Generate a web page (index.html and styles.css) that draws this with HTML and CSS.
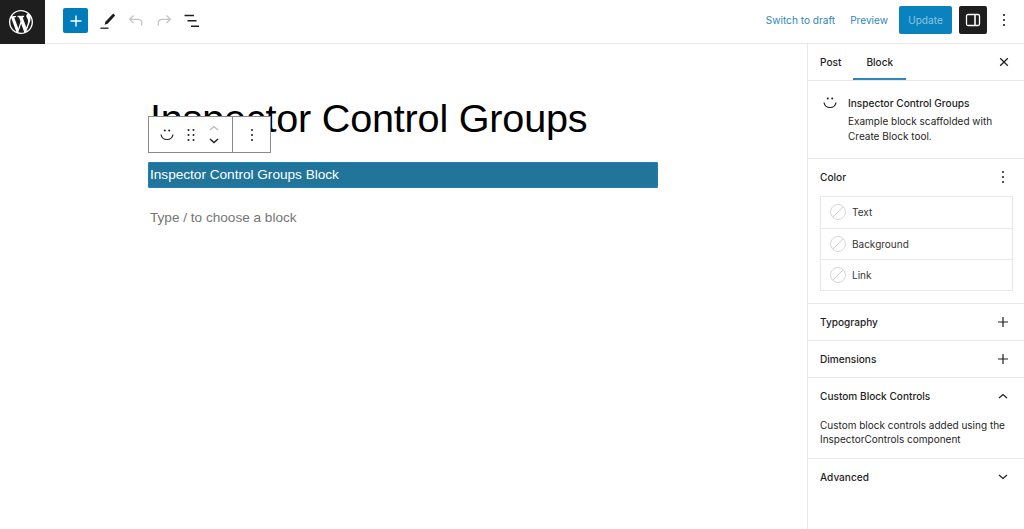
FILE: index.html
```html
<!DOCTYPE html>
<html lang="en">
<head>
    <meta charset="UTF-8">
    <meta name="viewport" content="width=device-width, initial-scale=1.0">
    <title>Inspector Control Groups</title>
    <link rel="stylesheet" href="styles.css">
</head>
<body>
    <header class="topbar">
        <a class="logo">
            <svg width="24" height="24" viewBox="0 0 20 20" fill="#fff"><path d="M20 10c0-5.51-4.49-10-10-10C4.48 0 0 4.49 0 10c0 5.52 4.48 10 10 10 5.51 0 10-4.48 10-10zM7.78 15.37L4.37 6.22c.55-.02 1.17-.08 1.17-.08.5-.06.44-1.13-.06-1.11 0 0-1.45.11-2.37.11-.18 0-.37 0-.58-.01C4.12 2.69 6.87 1.11 10 1.11c2.33 0 4.45.87 6.05 2.34-.68-.11-1.65.39-1.65 1.58 0 .74.45 1.36.9 2.1.35.61.55 1.36.55 2.46 0 1.49-1.4 5-1.4 5l-3.03-8.37c.54-.02.82-.17.82-.17.5-.05.44-1.25-.06-1.22 0 0-1.44.12-2.38.12-.87 0-2.33-.12-2.33-.12-.5-.03-.56 1.2-.06 1.22l.92.08 1.26 3.41zM17.41 10c.24-.64.74-1.87.43-4.25.7 1.29 1.05 2.71 1.05 4.25 0 3.29-1.73 6.24-4.4 7.78.97-2.59 1.94-5.2 2.92-7.78zM6.1 18.09C3.12 16.65 1.11 13.53 1.11 10c0-1.3.23-2.48.72-3.59C3.25 10.3 4.67 14.2 6.1 18.09zm4.03-6.63l2.58 6.98c-.86.29-1.76.45-2.71.45-.79 0-1.57-.11-2.29-.33.81-2.38 1.62-4.74 2.42-7.1z"/></svg>
        </a>
        <div class="tools">
            <button class="add-btn">
                <svg width="12" height="12" viewBox="0 0 12 12"><path d="M6 .5v11M.5 6h11" stroke="#fff" stroke-width="1.4" fill="none"/></svg>
            </button>
            <span class="tool">
                <svg width="18" height="18" viewBox="0 0 18 18"><path d="M14.2 1.6l2 2-7.6 8.2-3 1 .8-3.1z" fill="#1e1e1e"/><path d="M1.5 16.2h8" stroke="#1e1e1e" stroke-width="1.3"/></svg>
            </span>
            <span class="tool">
                <svg width="18" height="18" viewBox="0 0 18 18" fill="none" stroke="#c4c4c4" stroke-width="1.3"><path d="M6.5 3.5L2.6 7.3l3.9 3.7M2.8 7.3h8.2c2.2 0 3.7 1.4 3.7 3.5v2.7"/></svg>
            </span>
            <span class="tool">
                <svg width="18" height="18" viewBox="0 0 18 18" fill="none" stroke="#c4c4c4" stroke-width="1.3"><path d="M11.5 3.5l3.9 3.8-3.9 3.7M15.2 7.3H7C4.8 7.3 3.3 8.7 3.3 10.8v2.7"/></svg>
            </span>
            <span class="tool">
                <svg width="18" height="18" viewBox="0 0 18 18" fill="none" stroke="#1e1e1e" stroke-width="1.4"><path d="M1.5 3.5h9.5M4.5 8.800h9M8 14.200h8"/></svg>
            </span>
        </div>
        <div class="actions">
            <a class="link-btn">Switch to draft</a>
            <a class="link-btn">Preview</a>
            <button class="update-btn">Update</button>
            <button class="toggle-btn">
                <svg width="18" height="18" viewBox="0 0 18 18" fill="none" stroke="#fff" stroke-width="1.3"><rect x="2.500" y="3.500" width="13" height="11" rx="1.500"/><path d="M11 3.500v11" stroke-width="1.600"/></svg>
            </button>
            <span class="kebab">
                <svg width="4" height="14" viewBox="0 0 4 14" fill="#1e1e1e"><circle cx="2" cy="2" r="1.100"/><circle cx="2" cy="7" r="1.100"/><circle cx="2" cy="12" r="1.100"/></svg>
            </span>
        </div>
    </header>

    <div class="layout">
        <main class="canvas">
            <div class="block-toolbar">
                <div class="tb-group">
                    <svg width="16" height="14" viewBox="0 0 16 14" fill="none" stroke="#1e1e1e" stroke-width="1.200"><path d="M2 6.500c.6 3.400 3 5 6 5s5.400-1.600 6-5"/><circle cx="5.800" cy="2.500" r="1" fill="#1e1e1e" stroke="none"/><circle cx="10.200" cy="2.500" r="1" fill="#1e1e1e" stroke="none"/></svg>
                    <span class="drag">
                        <svg width="10" height="14" viewBox="0 0 10 14" fill="#1e1e1e"><circle cx="2.500" cy="2" r="1"/><circle cx="7.500" cy="2" r="1"/><circle cx="2.500" cy="7" r="1"/><circle cx="7.500" cy="7" r="1"/><circle cx="2.500" cy="12" r="1"/><circle cx="7.500" cy="12" r="1"/></svg>
                    </span>
                    <span class="movers">
                        <svg width="12" height="8" viewBox="0 0 12 8" fill="none" stroke="#b8b8b8" stroke-width="1.200"><path d="M2 6l4-3.500L10 6"/></svg>
                        <svg width="12" height="8" viewBox="0 0 12 8" fill="none" stroke="#1e1e1e" stroke-width="1.400"><path d="M2 2l4 3.500L10 2"/></svg>
                    </span>
                </div>
                <div class="tb-more">
                    <svg width="4" height="14" viewBox="0 0 4 14" fill="#1e1e1e"><circle cx="2" cy="2" r="1"/><circle cx="2" cy="7" r="1"/><circle cx="2" cy="12" r="1"/></svg>
                </div>
            </div>
            <h1 class="post-title">Inspector Control Groups</h1>
            <div class="selected-block">Inspector Control Groups Block</div>
            <p class="placeholder">Type / to choose a block</p>
        </main>

        <aside class="sidebar">
            <div class="tabs">
                <span class="tab">Post</span>
                <span class="tab active">Block</span>
                <span class="close">
                    <svg width="10" height="10" viewBox="0 0 10 10" fill="none" stroke="#1e1e1e" stroke-width="1.300"><path d="M1.200 1.200l7.600 7.600M8.800 1.200L1.200 8.800"/></svg>
                </span>
            </div>

            <section class="block-card">
                <span class="card-icon">
                    <svg width="16" height="14" viewBox="0 0 16 14" fill="none" stroke="#1e1e1e" stroke-width="1.200"><path d="M2 6.500c.6 3.400 3 5 6 5s5.400-1.600 6-5"/><circle cx="5.800" cy="2.500" r="1" fill="#1e1e1e" stroke="none"/><circle cx="10.200" cy="2.500" r="1" fill="#1e1e1e" stroke="none"/></svg>
                </span>
                <div>
                    <h2 class="card-title">Inspector Control Groups</h2>
                    <p class="card-desc">Example block scaffolded with Create Block tool.</p>
                </div>
            </section>

            <section class="panel color-panel">
                <div class="panel-head">
                    <span>Color</span>
                    <span class="panel-icon">
                        <svg width="4" height="14" viewBox="0 0 4 14" fill="#1e1e1e"><circle cx="2" cy="2" r="1"/><circle cx="2" cy="7" r="1"/><circle cx="2" cy="12" r="1"/></svg>
                    </span>
                </div>
                <div class="color-list">
                    <div class="color-row"><span class="swatch"></span>Text</div>
                    <div class="color-row"><span class="swatch"></span>Background</div>
                    <div class="color-row"><span class="swatch"></span>Link</div>
                </div>
            </section>

            <section class="panel">
                <div class="panel-head">
                    <span>Typography</span>
                    <span class="panel-icon">
                        <svg width="12" height="12" viewBox="0 0 12 12" fill="none" stroke="#1e1e1e" stroke-width="1.200"><path d="M6 1v10M1 6h10"/></svg>
                    </span>
                </div>
            </section>
            <section class="panel">
                <div class="panel-head">
                    <span>Dimensions</span>
                    <span class="panel-icon">
                        <svg width="12" height="12" viewBox="0 0 12 12" fill="none" stroke="#1e1e1e" stroke-width="1.200"><path d="M6 1v10M1 6h10"/></svg>
                    </span>
                </div>
            </section>
            <section class="panel">
                <div class="panel-head">
                    <span>Custom Block Controls</span>
                    <span class="panel-icon">
                        <svg width="10" height="6" viewBox="0 0 10 6" fill="none" stroke="#1e1e1e" stroke-width="1.200"><path d="M1 5l4-3.500L9 5"/></svg>
                    </span>
                </div>
                <p class="panel-text">Custom block controls added using the InspectorControls component</p>
            </section>
            <section class="panel last">
                <div class="panel-head">
                    <span>Advanced</span>
                    <span class="panel-icon">
                        <svg width="10" height="6" viewBox="0 0 10 6" fill="none" stroke="#1e1e1e" stroke-width="1.200"><path d="M1 1l4 3.500L9 1"/></svg>
                    </span>
                </div>
            </section>
        </aside>
    </div>
</body>
</html>
```

FILE: styles.css
```css
* {
    box-sizing: border-box;
}
html, body {
    height: 100%;
}
body {
    margin: 0;
    height: 529px;
    overflow: hidden;
    display: flex;
    flex-direction: column;
    background: #fff;
    color: #1e1e1e;
    font-family: 'Inter', 'Liberation Sans', sans-serif;
    font-size: 10px;
}
button {
    border: none;
    padding: 0;
    font-family: inherit;
}
svg {
    display: block;
}

/* top bar */
.topbar {
    height: 44px;
    flex: none;
    display: flex;
    align-items: flex-start;
    border-bottom: 1px solid #e8e8e8;
}
.logo {
    width: 45px;
    height: 44px;
    padding: 0 3px 1px 0;
    background: #1e1e1e;
    display: flex;
    justify-content: center;
    align-items: center;
}
.tools {
    height: 41px;
    display: flex;
    align-items: center;
    margin-left: 18px;
}
.add-btn {
    width: 25px;
    height: 25px;
    margin-right: 6px;
    background: #007cba;
    border-radius: 2px;
    display: flex;
    justify-content: center;
    align-items: center;
}
.tool {
    width: 28px;
    display: flex;
    justify-content: center;
}
.actions {
    height: 40px;
    margin-left: auto;
    padding-right: 3px;
    display: flex;
    align-items: center;
}
.link-btn {
    color: #2f86bd;
    font-size: 10.1px;
    margin-right: 15px;
    white-space: nowrap;
}
.link-btn + .link-btn {
    margin-right: 11px;
}
.update-btn {
    width: 53px;
    height: 28px;
    background: #0a82bd;
    color: #8ec4e0;
    font-size: 10.1px;
    border-radius: 2px;
}
.toggle-btn {
    width: 28px;
    height: 28px;
    margin-left: 7px;
    background: #1e1e1e;
    border-radius: 2px;
    display: flex;
    justify-content: center;
    align-items: center;
}
.kebab {
    width: 34px;
    display: flex;
    justify-content: center;
}

/* main area */
.layout {
    flex: 1;
    display: flex;
    min-height: 0;
}
.canvas {
    flex: 1;
    position: relative;
    padding: 47px 0 0 148px;
    font-family: 'Liberation Sans', Arial, sans-serif;
}
.post-title {
    margin: 0 0 0 2px;
    font-size: 39.6px;
    font-weight: 400;
    line-height: 54px;
    color: #000;
    letter-spacing: -0.2px;
}
.selected-block {
    width: 510px;
    height: 26px;
    margin-top: 17px;
    padding-left: 1px;
    background: #21759b;
    border: 1px solid #1c80bd;
    border-radius: 1px;
    color: #fff;
    font-size: 13.6px;
    line-height: 24px;
}
.placeholder {
    margin: 19px 0 0 2px;
    color: #757575;
    font-size: 13.6px;
    line-height: 21px;
}
.block-toolbar {
    position: absolute;
    left: 148px;
    top: 72px;
    width: 123px;
    height: 37px;
    background: #fff;
    border: 1px solid #8a8a8a;
    display: flex;
}
.tb-group {
    width: 84px;
    border-right: 1px solid #8a8a8a;
    display: flex;
    align-items: center;
    padding-left: 10px;
}
.drag {
    margin-left: 11px;
}
.movers {
    margin-left: 12px;
    display: flex;
    flex-direction: column;
    gap: 5px;
}
.tb-more {
    flex: 1;
    display: flex;
    justify-content: center;
    align-items: center;
}

/* sidebar */
.sidebar {
    width: 217px;
    flex: none;
    border-left: 1px solid #e8e8e8;
}
.tabs {
    height: 37px;
    display: flex;
    align-items: stretch;
    border-bottom: 1px solid #e8e8e8;
    padding-left: 12px;
    font-size: 10.1px;
    font-weight: 500;
}
.tab {
    display: flex;
    align-items: center;
    margin-right: 12px;
}
.tab.active {
    padding: 0 13px;
    box-shadow: inset 0 -2px 0 #2f86bd;
}
.close {
    margin-left: auto;
    margin-right: 15px;
    display: flex;
    align-items: center;
}
.block-card {
    height: 78px;
    display: flex;
    padding: 15px 10px 0 14px;
    border-bottom: 1px solid #e8e8e8;
}
.card-icon {
    width: 26px;
    flex: none;
}
.card-title {
    margin: 0;
    font-size: 10.1px;
    font-weight: 500;
    line-height: 14px;
}
.card-desc {
    margin: 4px 0 0;
    font-size: 10px;
    line-height: 15px;
}
.panel {
    padding: 0 15px 0 12px;
    border-bottom: 1px solid #e8e8e8;
}
.panel.last {
    border-bottom: none;
}
.panel-head {
    height: 36px;
    display: flex;
    justify-content: space-between;
    align-items: center;
    font-size: 10.1px;
    font-weight: 500;
}
.panel-icon {
    width: 12px;
    display: flex;
    justify-content: center;
}
.color-panel .panel-head {
    height: 37px;
    padding-bottom: 1px;
}
.color-list {
    width: 193px;
    margin-bottom: 12px;
    border: 1px solid #e8e8e8;
}
.color-row {
    height: 31px;
    display: flex;
    align-items: center;
    padding-left: 9px;
    gap: 6px;
    font-size: 10px;
    color: #333;
}
.color-row:first-child {
    padding-bottom: 1px;
}
.color-row + .color-row {
    border-top: 1px solid #e8e8e8;
}
.swatch {
    width: 16px;
    height: 16px;
    flex: none;
    border-radius: 50%;
    border: 1px solid #d8d8d8;
    background: linear-gradient(135deg, transparent 47%, #d0d0d0 47%, #d0d0d0 53%, transparent 53%);
}
.panel-text {
    margin: 0 -5px 12px 0;
    padding-top: 4px;
    font-size: 10px;
    line-height: 14px;
}
```
